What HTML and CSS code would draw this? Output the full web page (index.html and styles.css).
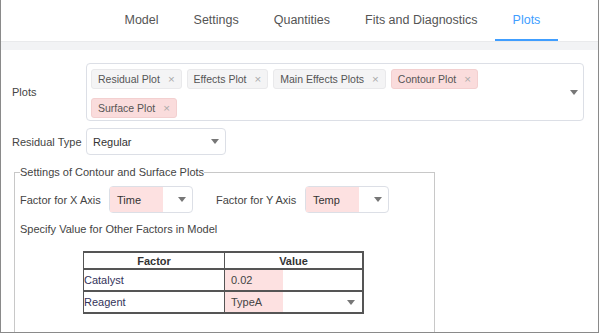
FILE: index.html
```html
<!DOCTYPE html>
<html lang="en">
<head>
    <meta charset="UTF-8">
    <title>Plots</title>
    <link rel="stylesheet" href="styles.css">
</head>
<body>
    <div class="frame">
        <div class="tabs">
            <a class="tab">Model</a>
            <a class="tab">Settings</a>
            <a class="tab">Quantities</a>
            <a class="tab">Fits and Diagnostics</a>
            <a class="tab active">Plots</a>
        </div>
        <div class="band"></div>

        <div class="content">
            <!-- plots multi select -->
            <div class="row plots-row">
                <label class="label">Plots</label>
                <div class="multi">
                    <span class="tag">Residual Plot<i class="close">×</i></span>
                    <span class="tag">Effects Plot<i class="close">×</i></span>
                    <span class="tag">Main Effects Plots<i class="close">×</i></span>
                    <span class="tag hl">Contour Plot<i class="close">×</i></span>
                    <span class="tag hl">Surface Plot<i class="close">×</i></span>
                    <span class="caret multi-caret"></span>
                </div>
            </div>

            <div class="row type-row">
                <label class="label">Residual Type</label>
                <div class="select type-select">
                    <span>Regular</span>
                    <span class="caret"></span>
                </div>
            </div>

            <fieldset class="group">
                <legend>Settings of Contour and Surface Plots</legend>
                <div class="row axis-row">
                    <label class="axis-label">Factor for X Axis</label>
                    <div class="select axis-select">
                        <span class="mark">Time</span>
                        <span class="caret"></span>
                    </div>
                    <label class="axis-label y-label">Factor for Y Axis</label>
                    <div class="select axis-select">
                        <span class="mark">Temp</span>
                        <span class="caret"></span>
                    </div>
                </div>
                <p class="note">Specify Value for Other Factors in Model</p>
                <table class="factors">
                    <thead>
                        <tr><th>Factor</th><th>Value</th></tr>
                    </thead>
                    <tbody>
                        <tr>
                            <td>Catalyst</td>
                            <td><div class="cell"><span class="mark cell-mark">0.02</span></div></td>
                        </tr>
                        <tr>
                            <td>Reagent</td>
                            <td><div class="cell"><span class="mark cell-mark">TypeA</span><span class="caret"></span></div></td>
                        </tr>
                    </tbody>
                </table>
            </fieldset>
        </div>
    </div>
</body>
</html>
```

FILE: styles.css
```css
body {
    margin: 0;
    font-family: 'Liberation Sans', Arial, sans-serif;
    font-size: 11px;
    color: #333;
    background-color: #fff;
}
.frame {
    width: 599px;
    height: 333px;
    box-sizing: border-box;
    border: 1px solid #8a8a8a;
    border-top: none;
    overflow: hidden;
}
/* top tabs */
.tabs {
    display: flex;
    height: 41px;
    padding-left: 106px;
}
.tab {
    padding: 0 17.5px;
    line-height: 40px;
    font-size: 12.5px;
    color: #555;
    border-bottom: 2px solid transparent;
}
.tab.active {
    color: #409eff;
    border-bottom-color: #409eff;
}
.band {
    height: 8px;
    background-color: #f2f3f5;
    border-top: 1px solid #e9eaec;
}
.content {
    padding-left: 11px;
}
.row {
    display: flex;
    align-items: center;
}
.label {
    width: 74px;
    color: #444;
}
.plots-row {
    margin-top: 13px;
}
.multi {
    position: relative;
    width: 498px;
    height: 58px;
    box-sizing: border-box;
    border: 1px solid #dcdfe6;
    border-radius: 4px;
    padding: 5px 30px 0 4px;
    display: flex;
    flex-wrap: wrap;
    align-content: flex-start;
    column-gap: 5px;
    row-gap: 9px;
}
.tag {
    display: inline-flex;
    align-items: center;
    height: 20px;
    box-sizing: border-box;
    padding: 0 6px 0 6px;
    background-color: #f4f4f5;
    border: 1px solid #e9e9eb;
    border-radius: 3px;
    font-size: 10.5px;
    color: #555;
}
.tag.hl {
    background-color: #fadcdc;
    border-color: #f3d0d0;
}
.close {
    font-style: normal;
    color: #aaa;
    font-size: 11.5px;
    margin-left: 8px;
}
.caret {
    width: 0;
    height: 0;
    border-left: 4px solid transparent;
    border-right: 4px solid transparent;
    border-top: 5px solid #777;
}
.multi-caret {
    position: absolute;
    right: 5px;
    top: 26px;
}
.type-row {
    margin-top: 7px;
}
.select {
    display: flex;
    align-items: center;
    justify-content: space-between;
    height: 27px;
    box-sizing: border-box;
    border: 1px solid #dcdfe6;
    border-radius: 4px;
    padding: 0 6px 0 6px;
    color: #333;
}
.type-select {
    width: 140px;
}
/* contour / surface settings */
.group {
    width: 421px;
    box-sizing: border-box;
    margin: 11px 0 0 2px;
    padding: 8px 5px 40px 5px;
    border: 1px solid #c8c8c8;
}
.group legend {
    padding: 0;
    color: #444;
}
.axis-label {
    width: 89px;
    color: #444;
}
.y-label {
    margin-left: 23px;
}
.axis-select {
    width: 84px;
    padding-left: 0;
    padding-right: 6px;
}
.mark {
    display: flex;
    align-items: center;
    align-self: stretch;
    width: 46px;
    padding-left: 7px;
    background-color: #fde1e1;
}
.note {
    margin: 10px 0 0 0;
    color: #444;
}
.factors {
    margin: 16px 0 0 63px;
    width: 281px;
    border-collapse: collapse;
    border: 2px solid #555;
    border-left-width: 1px;
    color: #33335a;
}
.factors th {
    height: 15px;
    padding: 0;
    border: 1px solid #555;
    border-bottom-width: 2px;
    font-size: 11px;
    color: #333;
}
.factors th:first-child {
    width: 140px;
}
.factors td {
    height: 20px;
    padding: 0;
    border: 1px solid #555;
    border-top-width: 2px;
}
.factors td:first-child {
    border-left-width: 1px;
}
.cell {
    display: flex;
    align-items: center;
    justify-content: space-between;
    height: 20px;
    padding-right: 7px;
}
.cell-mark {
    width: 52px;
    padding-left: 6px;
    color: #444;
}
```
